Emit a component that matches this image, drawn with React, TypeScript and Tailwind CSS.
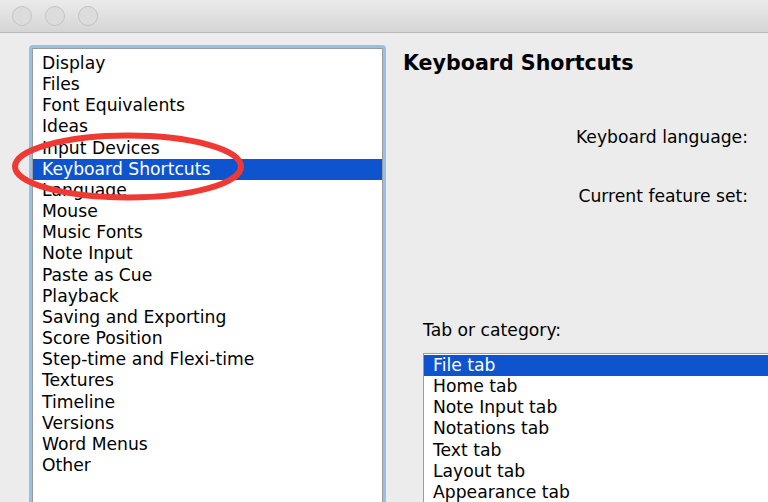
const categories = [
  'Display',
  'Files',
  'Font Equivalents',
  'Ideas',
  'Input Devices',
  'Keyboard Shortcuts',
  'Language',
  'Mouse',
  'Music Fonts',
  'Note Input',
  'Paste as Cue',
  'Playback',
  'Saving and Exporting',
  'Score Position',
  'Step-time and Flexi-time',
  'Textures',
  'Timeline',
  'Versions',
  'Word Menus',
  'Other',
];

const tabs = [
  'File tab',
  'Home tab',
  'Note Input tab',
  'Notations tab',
  'Text tab',
  'Layout tab',
  'Appearance tab',
];

const font = "font-['Lucida_Grande','DejaVu_Sans',sans-serif]";

function TrafficLight() {
  return (
    <div className="w-[20px] h-[20px] rounded-full bg-[#dcdcdc] border border-[#c4c4c4]" />
  );
}

export default function App() {
  return (
    <div className={`relative w-[768px] h-[502px] overflow-hidden bg-[#ececec] flex flex-col ${font}`}>
      {/* title bar */}
      <div className="h-[33px] shrink-0 flex items-center gap-[13px] pl-[12px] bg-gradient-to-b from-[#ebebeb] to-[#d5d5d5] border-b border-[#b9b9b9]">
        <TrafficLight />
        <TrafficLight />
        <TrafficLight />
      </div>

      <div className="flex flex-1 min-h-0 pt-[12px] pl-[29px]">
        {/* category list */}
        <div className="w-[357px] shrink-0 rounded-t-[4px] border-[3px] border-b-0 border-[#94c0f0]">
          <div className="h-full bg-white border border-b-0 border-[#9b9b9b] pt-[4px]">
            {categories.map((c) => (
              <div
                key={c}
                className={`h-[21.16px] leading-[21.16px] pl-[9px] text-[17.2px] ${
                  c === 'Keyboard Shortcuts' ? 'bg-[#0e54cf] text-white' : 'text-black'
                }`}
              >
                {c}
              </div>
            ))}
          </div>
        </div>

        {/* settings panel */}
        <div className="w-[382px] shrink-0 overflow-hidden flex flex-col pl-[17px]">
          <div className="mt-[6px] h-[24px] leading-[24px] text-[20.6px] font-bold text-black">
            Keyboard Shortcuts
          </div>
          <div className="mt-[52px] pr-[20px] h-[20px] leading-[20px] text-right text-[17.2px] text-black whitespace-nowrap">
            Keyboard language:
          </div>
          <div className="mt-[39px] pr-[20px] h-[20px] leading-[20px] text-right text-[17.2px] text-black whitespace-nowrap">
            Current feature set:
          </div>
          <div className="mt-[114px] pl-[20px] h-[20px] leading-[20px] text-[17.2px] text-black">
            Tab or category:
          </div>
          <div className="mt-[13px] ml-[20px] w-[400px] shrink-0 flex-1 bg-white border border-b-0 border-[#9b9b9b] pt-[1px]">
            {tabs.map((t) => (
              <div
                key={t}
                className={`h-[21.16px] leading-[21.16px] pl-[9px] text-[17.2px] ${
                  t === 'File tab' ? 'bg-[#0e54cf] text-white' : 'text-black'
                }`}
              >
                {t}
              </div>
            ))}
          </div>
        </div>
      </div>

      {/* hand-drawn highlight */}
      <svg className="absolute left-0 top-0 pointer-events-none" width="768" height="502">
        <ellipse cx="128" cy="166.5" rx="113" ry="31" fill="none" stroke="#ee3a33" strokeWidth="6" />
      </svg>
    </div>
  );
}
